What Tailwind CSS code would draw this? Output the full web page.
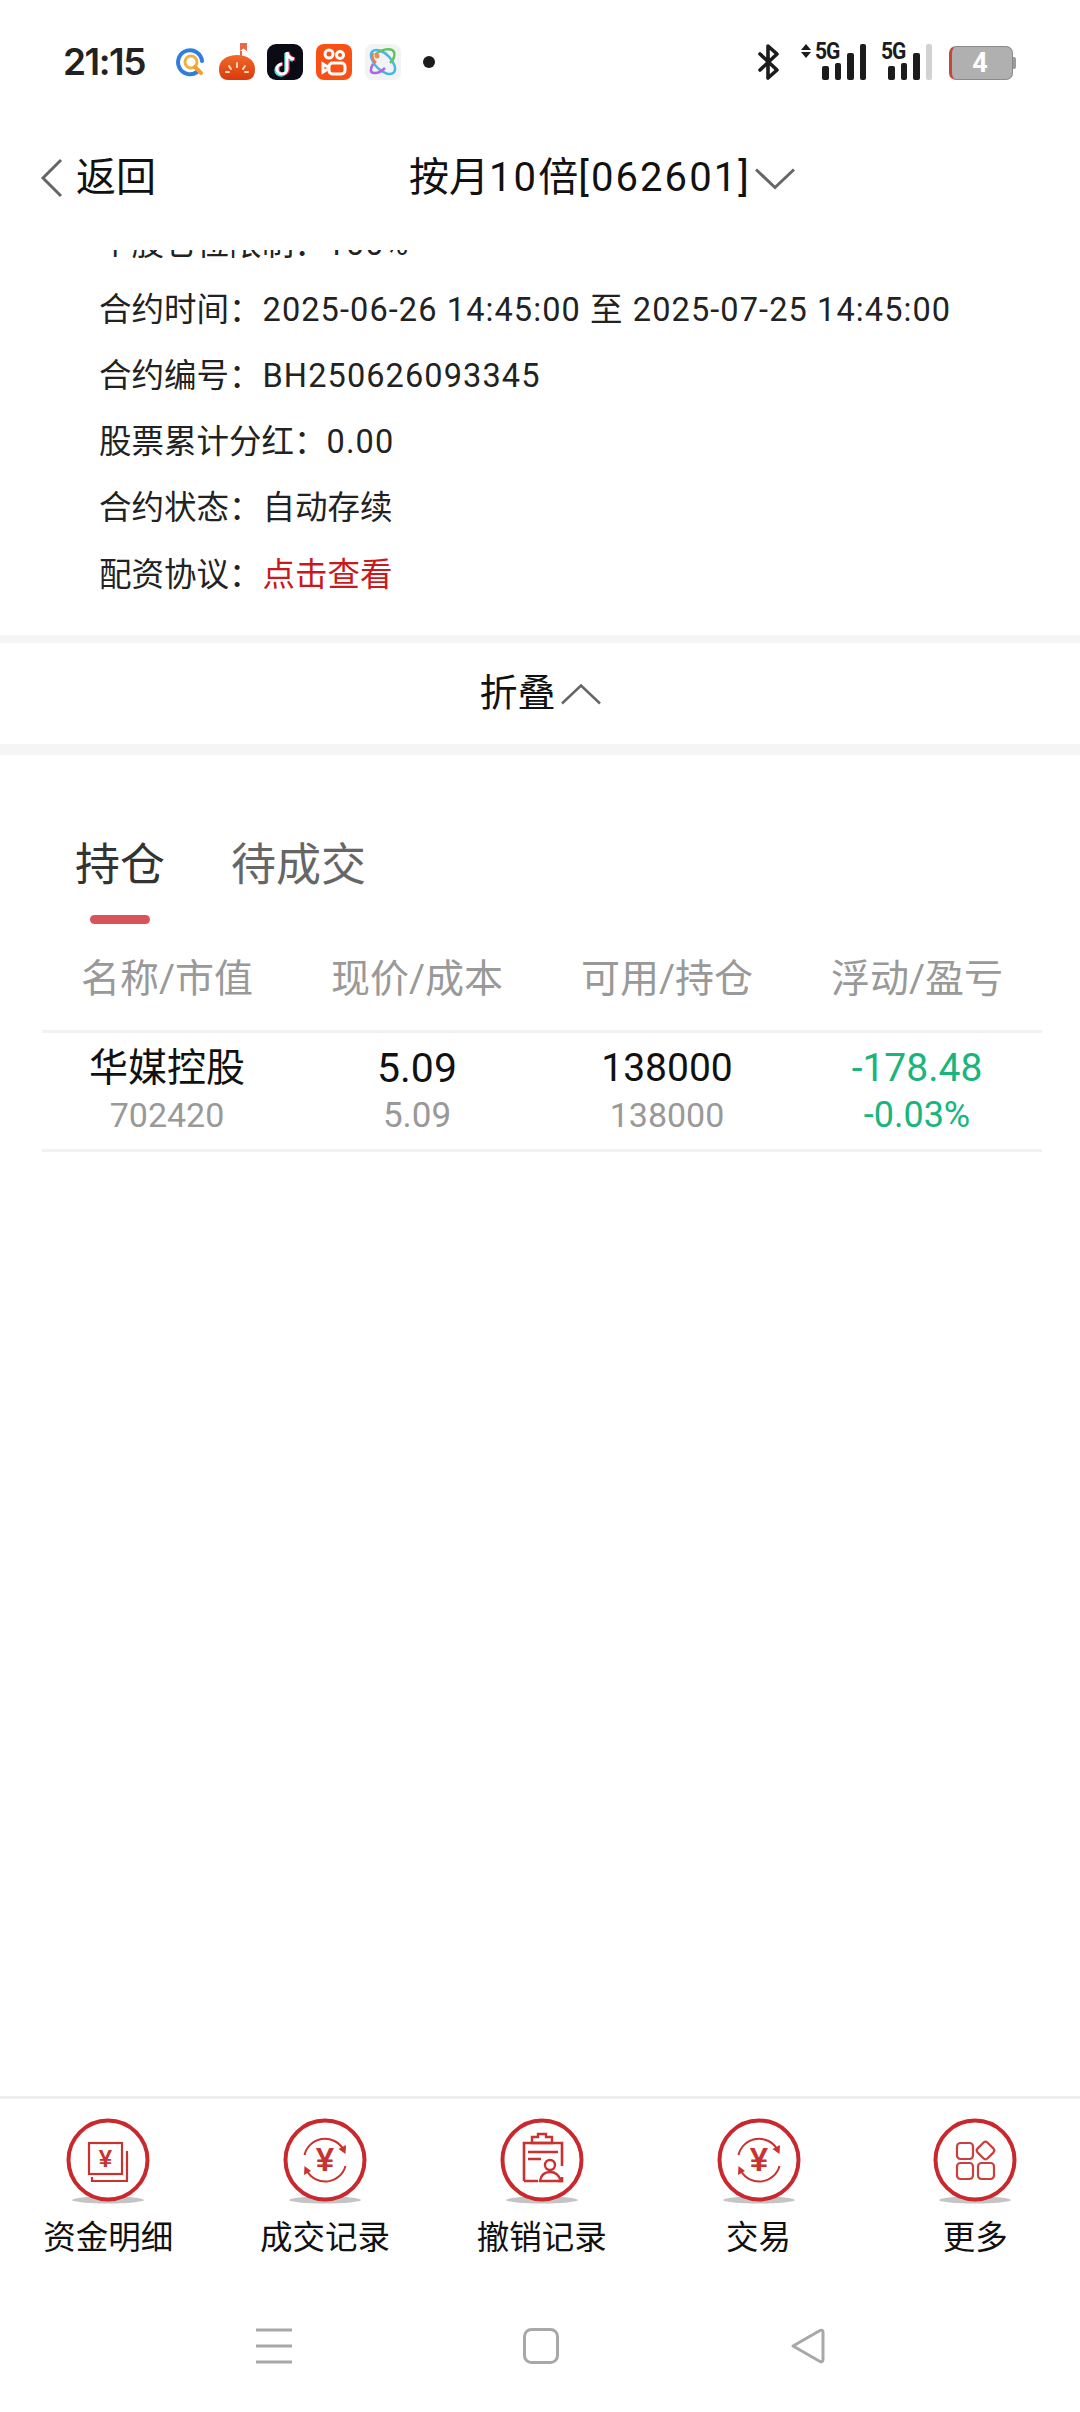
<!DOCTYPE html>
<html lang="zh-CN">
<head>
    <meta charset="UTF-8">
    <meta name="viewport" content="width=device-width, initial-scale=1.0">
    <title>按月10倍</title>
    <script src="https://cdn.jsdelivr.net/npm/@tailwindcss/browser@4"></script>
</head>
<body class="w-[1080px] h-[2412px] bg-white flex flex-col overflow-hidden text-[#111] font-['Roboto','Noto_Sans_CJK_SC',sans-serif]">

    <!-- status bar -->
    <div class="h-[106px] shrink-0 flex items-start pt-[44px] pl-[63px]">
        <span class="w-[100px] h-[36px] leading-[36px] text-[37px] font-semibold tracking-[-1.5px] text-[#222] font-['Inter',sans-serif]">21:15</span>
        <svg class="ml-[12px] mt-[3px]" width="32" height="32" viewBox="0 0 32 32" fill="none">
            <path d="M22 25A12 12 0 1 1 27 14" stroke="#2f7de1" stroke-width="4" stroke-linecap="round"/>
            <circle cx="16" cy="15" r="6" stroke="#f0b13c" stroke-width="3"/>
            <path d="M20 20l6 6" stroke="#f0a030" stroke-width="4" stroke-linecap="round"/>
        </svg>
        <svg class="ml-[11px] -mt-[1px]" width="38" height="38" viewBox="0 0 38 38">
            <defs>
                <linearGradient id="tm" x1="0" y1="0" x2="0" y2="1">
                    <stop offset="0" stop-color="#f0692a"/>
                    <stop offset="1" stop-color="#d93a0c"/>
                </linearGradient>
            </defs>
            <path d="M22 0h7v8l-3.500-2.500L22 8z" fill="#e8674a"/>
            <path d="M24 8v6h-2V8z" fill="#e8674a"/>
            <path d="M1 26C1 17 9 12 19 12s18 5 18 14c0 7-3 11-9 11H10C4 37 1 33 1 26z" fill="url(#tm)"/>
            <path d="M19 20v4M11 23l2 3M27 23l-2 3M8 29h3M27 29h3" stroke="#ffd9c0" stroke-width="2" stroke-linecap="round"/>
        </svg>
        <svg class="ml-[11px]" width="36" height="36" viewBox="0 0 36 36" fill="none">
            <rect width="36" height="36" rx="9" fill="#0b0b16"/>
            <path d="M20 8v17a5 5 0 1 1-5-5M20 8c.5 4 3 6.500 7 7" stroke="#3fe0e0" stroke-width="3.500" transform="translate(-1 1)"/>
            <path d="M20 8v17a5 5 0 1 1-5-5M20 8c.5 4 3 6.500 7 7" stroke="#f0305a" stroke-width="3.500" transform="translate(1 0)"/>
            <path d="M20 8v17a5 5 0 1 1-5-5M20 8c.5 4 3 6.500 7 7" stroke="#fff" stroke-width="3"/>
        </svg>
        <svg class="ml-[13px]" width="36" height="36" viewBox="0 0 36 36" fill="none">
            <rect width="36" height="36" rx="8" fill="#fa5014"/>
            <g stroke="#fff" stroke-width="3">
                <circle cx="13" cy="10" r="4"/>
                <circle cx="24" cy="11" r="3.500"/>
                <rect x="13" y="19" width="16" height="11" rx="3.500"/>
                <path d="M12 23l-5-3v8l5-3"/>
            </g>
        </svg>
        <svg class="ml-[13px]" width="36" height="36" viewBox="0 0 36 36" fill="none">
            <rect width="36" height="36" rx="8" fill="#f1f3f4"/>
            <ellipse cx="18" cy="18" rx="15" ry="8" stroke="#46b8e8" stroke-width="2.500" transform="rotate(45 18 18)"/>
            <path d="M10 11C16 5 27 3 29 8c1.500 4-1 8-4 11" stroke="#63c35a" stroke-width="2.500"/>
            <path d="M8 9c-2 4 1 8 3 10" stroke="#f07a50" stroke-width="2.500"/>
            <path d="M8 20c-3 5-3 9 1 9 4 .5 8-2 11-5" stroke="#a866ea" stroke-width="2.500"/>
            <circle cx="12" cy="12" r="2.500" fill="#f0885a"/>
        </svg>
        <span class="ml-[22px] mt-[12px] w-[12px] h-[12px] rounded-full bg-[#1c1c1c]"></span>

        <svg class="ml-[323px] -mt-[1px]" width="22" height="38" viewBox="0 0 22 38" fill="none">
            <path d="M2 11l17 16-9 8V3l9 8L2 27" stroke="#1c1c1c" stroke-width="3.600" stroke-linejoin="round" stroke-linecap="round"/>
        </svg>
        <div class="ml-[20px] -mt-[1px] relative w-[70px] h-[37px]">
            <svg class="absolute left-0 top-0" width="12" height="16" viewBox="0 0 12 16">
                <path d="M6 1l5 6H1zM6 15l5-6H1z" fill="#1c1c1c"/>
            </svg>
            <span class="absolute left-[15px] -top-[1px] text-[21px] leading-[18px] font-bold tracking-[-1px] text-[#1c1c1c] scale-y-110">5G</span>
            <div class="absolute left-[22px] bottom-0 flex items-end gap-[6px]">
                <span class="w-[6.500px] h-[14px] rounded-[2px] bg-[#1c1c1c]"></span>
                <span class="w-[6.500px] h-[17px] rounded-[2px] bg-[#1c1c1c]"></span>
                <span class="w-[6.500px] h-[27px] rounded-[2px] bg-[#1c1c1c]"></span>
                <span class="w-[6.500px] h-[36px] rounded-[2px] bg-[#1c1c1c]"></span>
            </div>
        </div>
        <div class="-ml-[6px] -mt-[1px] relative w-[74px] h-[37px]">
            <span class="absolute left-[17px] -top-[1px] text-[21px] leading-[18px] font-bold tracking-[-1px] text-[#1c1c1c] scale-y-110">5G</span>
            <div class="absolute left-[24px] bottom-0 flex items-end gap-[6px]">
                <span class="w-[6.500px] h-[14px] rounded-[2px] bg-[#1c1c1c]"></span>
                <span class="w-[6.500px] h-[17px] rounded-[2px] bg-[#1c1c1c]"></span>
                <span class="w-[6.500px] h-[27px] rounded-[2px] bg-[#1c1c1c]"></span>
                <span class="w-[6.500px] h-[36px] rounded-[2px] bg-[#d2d2d2]"></span>
            </div>
        </div>
        <div class="ml-[11px] mt-[2px] relative w-[64px] h-[34px] rounded-[7px] bg-[#b0b0b0] border-[1.500px] border-[#8a8a8a] border-l-[3px] border-l-[#c8453f] flex items-center justify-center">
            <span class="text-[27px] font-bold leading-none text-white mr-[4px]">4</span>
            <span class="absolute -right-[4px] top-[10px] w-[3px] h-[12px] rounded-r-[2px] bg-[#9a9a9a]"></span>
        </div>
    </div>

    <!-- title -->
    <div class="h-[144px] shrink-0 flex items-center relative">
        <svg class="ml-[40px]" width="24" height="40" viewBox="0 0 24 40" fill="none">
            <path d="M21 2L3 20l18 18" stroke="#666" stroke-width="3"/>
        </svg>
        <span class="ml-[12px] text-[40px] text-[#111]">返回</span>
        <div class="absolute left-[409px] top-0 h-full flex items-center">
            <span class="text-[40px] text-[#111]">按月<span class="tracking-[2.100px]">10</span>倍<span class="tracking-[2.100px]">[062601]</span></span>
            <svg class="ml-[4px] mt-[2px]" width="40" height="22" viewBox="0 0 40 22" fill="none">
                <path d="M1 1.500l19 18 19-18" stroke="#666" stroke-width="3"/>
            </svg>
        </div>
    </div>

    <!-- contract details, scrolled under the title -->
    <div class="h-[385px] shrink-0 overflow-hidden">
        <div class="-mt-[39px] pl-[99px] text-[32.500px] text-[#222]">
            <div class="h-[66.200px] flex items-center whitespace-pre">个股仓位限制：<span class="tracking-[1.100px]">100%</span></div>
            <div class="h-[66.200px] flex items-center whitespace-pre">合约时间：<span class="ml-[1px] tracking-[1.100px]">2025-06-26 14:45:00 至 2025-07-25 14:45:00</span></div>
            <div class="h-[66.200px] flex items-center whitespace-pre">合约编号：<span class="ml-[1px] tracking-[1.100px]">BH250626093345</span></div>
            <div class="h-[66.200px] flex items-center whitespace-pre">股票累计分红：<span class="tracking-[1.100px]">0.00</span></div>
            <div class="h-[66.200px] flex items-center whitespace-pre">合约状态：<span class="ml-[1px]">自动存续</span></div>
            <div class="h-[66.200px] flex items-center whitespace-pre">配资协议：<span class="ml-[1px] text-[#c9191c]">点击查看</span></div>
        </div>
    </div>
    <div class="h-[8px] shrink-0 bg-[#f5f5f5]"></div>

    <div class="h-[101px] shrink-0 flex items-center justify-center">
        <span class="text-[38px] text-[#111]">折叠</span>
        <svg class="ml-[5px]" width="40" height="22" viewBox="0 0 40 22" fill="none">
            <path d="M1 20.500l19-18 19 18" stroke="#666" stroke-width="2.500"/>
        </svg>
    </div>
    <div class="h-[11px] shrink-0 bg-[#f5f5f5]"></div>

    <!-- tabs -->
    <div class="mt-[81px] h-[60px] shrink-0 flex items-center pl-[75px] gap-[66px] text-[45px]">
        <span class="text-[#333]">持仓</span>
        <span class="text-[#666]">待成交</span>
    </div>
    <div class="mt-[19px] ml-[90px] w-[60px] h-[9px] shrink-0 rounded-full bg-[#d9535a]"></div>

    <!-- positions table -->
    <div class="mx-[42px] w-[1000px] shrink-0">
        <div class="grid grid-cols-4 h-[109px] pt-[5px] items-center text-center text-[39px] text-[#999] border-b-[3px] border-[#f2f2f2]">
            <span>名称/市值</span>
            <span>现价/成本</span>
            <span>可用/持仓</span>
            <span>浮动/盈亏</span>
        </div>
        <div class="grid grid-cols-4 h-[119px] pt-[12px] text-center border-b-[3px] border-[#f2f2f2]">
            <div>
                <div class="h-[46px] leading-[46px] text-[39px] text-[#111]">华媒控股</div>
                <div class="h-[49px] leading-[49px] text-[34px] text-[#999]">702420</div>
            </div>
            <div>
                <div class="h-[46px] leading-[46px] text-[41px] text-[#111]">5.09</div>
                <div class="h-[49px] leading-[49px] text-[35px] text-[#999]">5.09</div>
            </div>
            <div>
                <div class="h-[46px] leading-[46px] text-[39px] text-[#111]">138000</div>
                <div class="h-[49px] leading-[49px] text-[34px] text-[#999]">138000</div>
            </div>
            <div class="text-[#19b57d]">
                <div class="h-[46px] leading-[46px] text-[39px]">-178.48</div>
                <div class="h-[49px] leading-[49px] text-[36px]">-0.03%</div>
            </div>
        </div>
    </div>

    <div class="flex-1"></div>

    <!-- bottom actions -->
    <div class="h-[170px] shrink-0 border-t-[3px] border-[#eeeeee] overflow-hidden">
        <div class="grid grid-cols-[repeat(5,216.750px)] pt-[17px]">
            <div class="flex flex-col items-center">
                <svg width="88" height="92" viewBox="0 0 88 92" fill="none">
                    <ellipse cx="44" cy="84" rx="36" ry="3.500" fill="#c4c4c4"/>
                    <circle cx="44" cy="44" r="39.500" fill="#fff" stroke="#c9282d" stroke-width="4"/>
                    <rect x="25" y="27" width="33" height="31" stroke="#c9322f" stroke-width="2.200"/>
                    <path d="M63 35v30H28v-4" stroke="#c9322f" stroke-width="2.200"/>
                    <text x="41.500" y="50.500" text-anchor="middle" font-family="Liberation Sans" font-size="24" font-weight="700" fill="#c9322f">¥</text>
                </svg>
                <span class="h-[60px] leading-[60px] text-[32.500px] text-[#111]">资金明细</span>
            </div>
            <div class="flex flex-col items-center">
                <svg width="88" height="92" viewBox="0 0 88 92" fill="none">
                    <ellipse cx="44" cy="84" rx="36" ry="3.500" fill="#c4c4c4"/>
                    <circle cx="44" cy="44" r="39.500" fill="#fff" stroke="#c9282d" stroke-width="4"/>
                    <path d="M23.500 39A21 21 0 0 1 62 33M64.500 50A21 21 0 0 1 26 55" stroke="#c9322f" stroke-width="2"/>
                    <path d="M65 29l-.5 9-7-5zM23 59l.5-9 6.500 5z" fill="#c9322f"/>
                    <text x="44" y="55" text-anchor="middle" font-family="Liberation Sans" font-size="33" font-weight="700" fill="#c9322f">¥</text>
                </svg>
                <span class="h-[60px] leading-[60px] text-[32.500px] text-[#111]">成交记录</span>
            </div>
            <div class="flex flex-col items-center">
                <svg width="88" height="92" viewBox="0 0 88 92" fill="none">
                    <ellipse cx="44" cy="84" rx="36" ry="3.500" fill="#c4c4c4"/>
                    <circle cx="44" cy="44" r="39.500" fill="#fff" stroke="#c9282d" stroke-width="4"/>
                    <path d="M34 27v-6h6v-3h8v3h6v6z" stroke="#c9322f" stroke-width="2.400"/>
                    <path d="M26 65V27h38v23M26 65h14M60 65h4v-4" stroke="#c9322f" stroke-width="2.600"/>
                    <path d="M30 36h30M30 43h13" stroke="#c9322f" stroke-width="2.400"/>
                    <circle cx="52" cy="49" r="5" stroke="#c9322f" stroke-width="2.400"/>
                    <path d="M42 65c1-6 5-9 10-9s9 3 11 9z" stroke="#c9322f" stroke-width="2.400"/>
                </svg>
                <span class="h-[60px] leading-[60px] text-[32.500px] text-[#111]">撤销记录</span>
            </div>
            <div class="flex flex-col items-center">
                <svg width="88" height="92" viewBox="0 0 88 92" fill="none">
                    <ellipse cx="44" cy="84" rx="36" ry="3.500" fill="#c4c4c4"/>
                    <circle cx="44" cy="44" r="39.500" fill="#fff" stroke="#c9282d" stroke-width="4"/>
                    <path d="M23.500 39A21 21 0 0 1 62 33M64.500 50A21 21 0 0 1 26 55" stroke="#c9322f" stroke-width="2"/>
                    <path d="M65 29l-.5 9-7-5zM23 59l.5-9 6.500 5z" fill="#c9322f"/>
                    <text x="44" y="55" text-anchor="middle" font-family="Liberation Sans" font-size="33" font-weight="700" fill="#c9322f">¥</text>
                </svg>
                <span class="h-[60px] leading-[60px] text-[32.500px] text-[#111]">交易</span>
            </div>
            <div class="flex flex-col items-center">
                <svg width="88" height="92" viewBox="0 0 88 92" fill="none">
                    <ellipse cx="44" cy="84" rx="36" ry="3.500" fill="#c4c4c4"/>
                    <circle cx="44" cy="44" r="39.500" fill="#fff" stroke="#c9282d" stroke-width="4"/>
                    <g stroke="#c9403c" stroke-width="2.200">
                        <rect x="26" y="27" width="16" height="16" rx="3.500"/>
                        <rect x="26" y="47" width="16" height="16" rx="3.500"/>
                        <rect x="47" y="47" width="16" height="16" rx="3.500"/>
                        <rect x="47.500" y="27.500" width="14" height="14" rx="3" transform="rotate(45 54.500 34.500)"/>
                    </g>
                </svg>
                <span class="h-[60px] leading-[60px] text-[32.500px] text-[#111]">更多</span>
            </div>
        </div>
    </div>

    <!-- system navigation -->
    <div class="h-[146px] shrink-0 pt-[62px] pl-[256px] flex items-start gap-[231px]">
        <svg width="36" height="36" viewBox="0 0 36 36" fill="none">
            <path d="M0 2h36M0 18h36M0 34h36" stroke="#a8a8a8" stroke-width="3"/>
        </svg>
        <svg width="36" height="36" viewBox="0 0 36 36" fill="none">
            <rect x="1.500" y="1.500" width="33" height="33" rx="7" stroke="#a8a8a8" stroke-width="3"/>
        </svg>
        <svg width="36" height="36" viewBox="0 0 36 36" fill="none">
            <path d="M3 18L30 2.500c1.500-.8 3-.2 3 2v27c0 2-1.500 2.800-3 2z" stroke="#a8a8a8" stroke-width="3" stroke-linejoin="round"/>
        </svg>
    </div>
</body>
</html>
